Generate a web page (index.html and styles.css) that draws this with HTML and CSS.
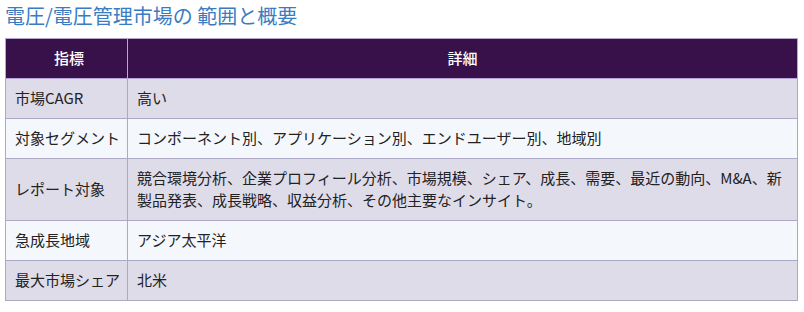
FILE: index.html
```html
<!DOCTYPE html>
<html lang="ja">
<head>
<meta charset="utf-8">
<link rel="stylesheet" href="styles.css">
</head>
<body>
<div class="page">
  <h2 class="title">電圧/電圧管理市場の 範囲と概要</h2>
  <table class="scope">
    <thead>
      <tr><th class="c1">指標</th><th>詳細</th></tr>
    </thead>
    <tbody>
      <tr class="odd"><td class="c1">市場CAGR</td><td>高い</td></tr>
      <tr class="even"><td class="c1">対象セグメント</td><td>コンポーネント別、アプリケーション別、エンドユーザー別、地域別</td></tr>
      <tr class="odd"><td class="c1">レポート対象</td><td>競合環境分析、企業プロフィール分析、市場規模、シェア、成長、需要、最近の動向、M&amp;A、新製品発表、成長戦略、収益分析、その他主要なインサイト。</td></tr>
      <tr class="even"><td class="c1">急成長地域</td><td>アジア太平洋</td></tr>
      <tr class="odd"><td class="c1">最大市場シェア</td><td>北米</td></tr>
    </tbody>
  </table>
</div>
</body>
</html>
```
FILE: styles.css
```css
html, body {
  margin: 0;
  padding: 0;
  background: #ffffff;
}
.page {
  padding: 2px 6px 0 5px;
  font-family: "Noto Sans CJK JP", "Noto Sans", sans-serif;
}
.title {
  margin: 0 0 8px 0;
  font-size: 20px;
  line-height: 28px;
  font-weight: 400;
  color: #3a7cc3;
}
.scope {
  width: 793px;
  border-collapse: collapse;
  font-size: 15px;
  line-height: 22px;
  color: #222222;
}
.scope th, .scope td {
  border: 1px solid #aca8c6;
  padding: 8px 9px 9px 9px;
  vertical-align: middle;
}
.scope th {
  background: #38114a;
  color: #ffffff;
  font-weight: 500;
  text-align: center;
  border-color: #b8a6d2;
}
.scope .c1 {
  width: 108px;
  padding-right: 4px;
  white-space: nowrap;
}
.scope td {
  text-align: left;
}
.odd td {
  background: #dfdcea;
}
.even td {
  background: #f4f7fc;
}
```
